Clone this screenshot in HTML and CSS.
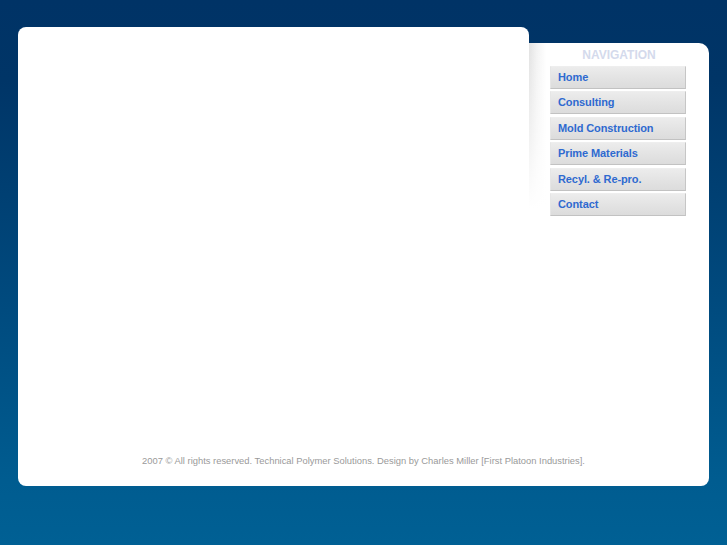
FILE: index.html
```
<!DOCTYPE html>
<html>
<head>
<meta charset="utf-8">
<link rel="stylesheet" href="styles.css">
</head>
<body>
<div class="page">
  <div class="top">
    <div class="main"></div>
    <div class="side">
      <div class="nav-title">NAVIGATION</div>
      <ul class="nav">
        <li><a href="#">Home</a></li>
        <li><a href="#">Consulting</a></li>
        <li><a href="#">Mold Construction</a></li>
        <li><a href="#">Prime Materials</a></li>
        <li><a href="#">Recyl. &amp; Re-pro.</a></li>
        <li><a href="#">Contact</a></li>
      </ul>
    </div>
  </div>
  <div class="footer">2007 © All rights reserved. Technical Polymer Solutions. Design by Charles Miller [First Platoon Industries].</div>
</div>
</body>
</html>
```
FILE: styles.css
```
html, body {
  margin: 0;
  padding: 0;
  height: 100%;
}
body {
  background: linear-gradient(to bottom, #003366 0px, #003567 80px, #004a7e 300px, #005c90 480px, #006094 545px);
  font-family: "Liberation Sans", Arial, sans-serif;
  overflow: hidden;
}
.page {
  width: 691px;
  margin: 27px 0 0 18px;
}
.top {
  display: flex;
  height: 190px;
}
.main {
  width: 511px;
  background: #fff;
  border-radius: 8px 8px 0 0;
}
.side {
  width: 180px;
  margin-top: 16px;
  border-top-right-radius: 10px;
  background:
    linear-gradient(to bottom, rgba(255,255,255,0) 0px, rgba(255,255,255,0.5) 90px, #fff 165px),
    linear-gradient(to right, #e2e2e2 0px, #f3f3f3 8px, #fff 17px);
  padding-top: 4px;
  box-sizing: border-box;
}
.nav-title {
  text-align: center;
  font-weight: bold;
  font-size: 12px;
  line-height: 16px;
  color: #d4daec;
  margin-bottom: 3px;
}
.nav {
  list-style: none;
  margin: 0;
  padding: 0 23px 0 21px;
  display: flex;
  flex-direction: column;
  gap: 2.4px;
}
.nav a {
  display: block;
  height: 21px;
  line-height: 21px;
  padding-left: 7px;
  border: 1px solid;
  border-color: #eeeeee #c6c6c6 #c2c2c2 #e6e6e6;
  background: linear-gradient(to bottom, #ececec, #e2e2e2 60%, #dcdcdc);
  color: #2f6ad0;
  font-weight: bold;
  font-size: 11px;
  letter-spacing: -0.1px;
  text-decoration: none;
}
.footer {
  background: #fff;
  height: 269px;
  border-radius: 0 0 8px 8px;
  box-sizing: border-box;
  display: flex;
  align-items: flex-end;
  justify-content: center;
  padding-bottom: 19px;
  font-size: 9.4px;
  line-height: 12px;
  color: #9a9a9a;
}
```
